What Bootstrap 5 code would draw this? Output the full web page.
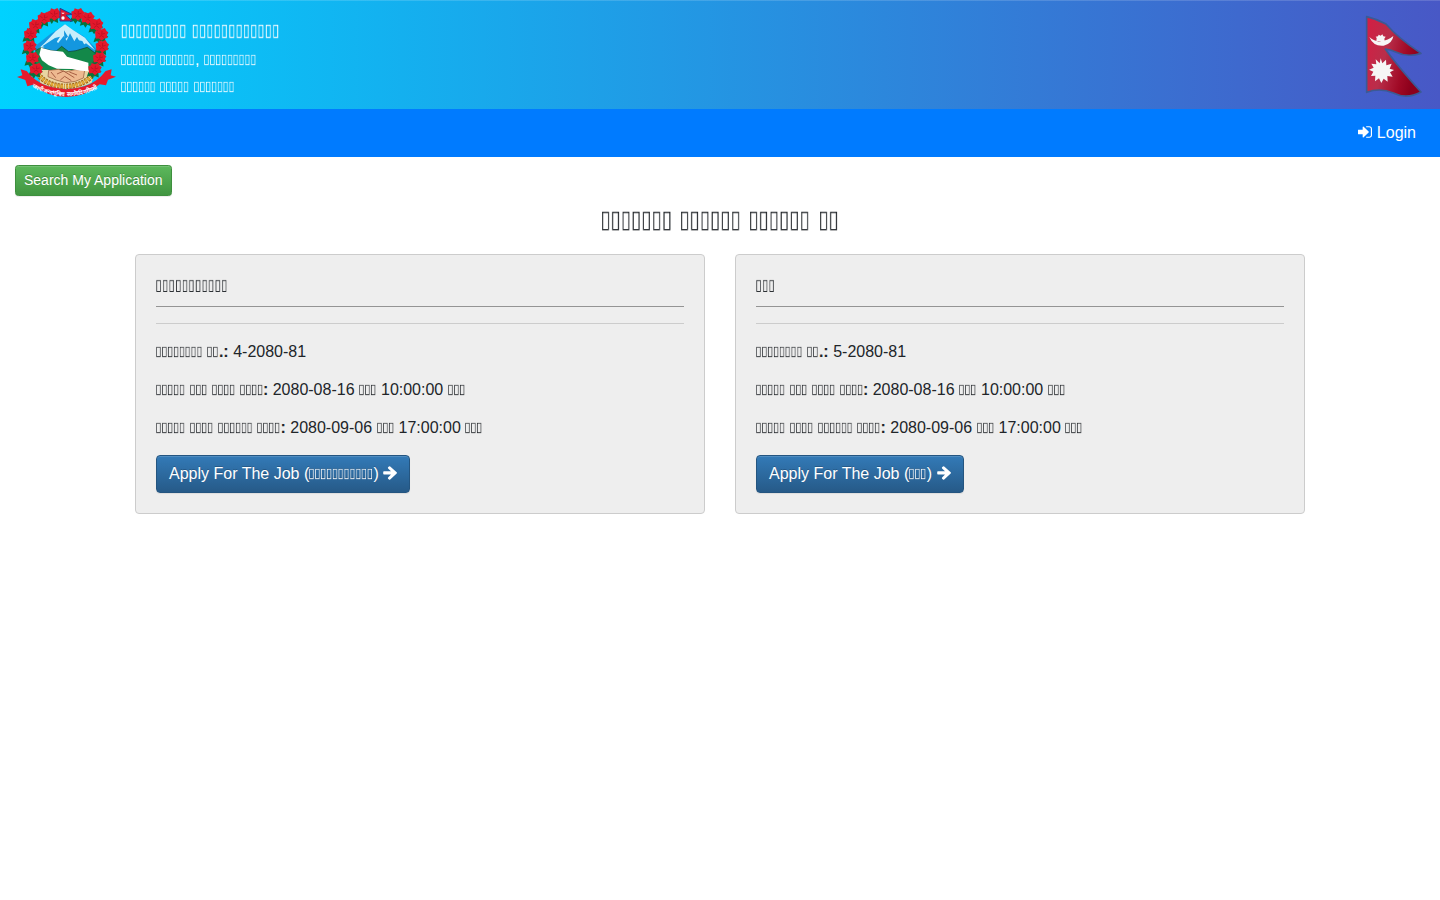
<!DOCTYPE html>
<html lang="ne">
<head>
<meta charset="utf-8">
<meta name="viewport" content="width=device-width, initial-scale=1">
<title>Job Application</title>
<link href="https://cdn.jsdelivr.net/npm/bootstrap@5.3.0/dist/css/bootstrap.min.css" rel="stylesheet">
<style>
body{font-family:"Liberation Sans",sans-serif;font-size:16px;line-height:1.5;color:#212529;background:#fff}
.site-head{height:109px;background:linear-gradient(90deg,#00d2ff 0%,#4858c6 100%);box-shadow:inset 0 1px 0 rgba(255,255,255,.15);padding:8px 18px 0 17px;color:#fff}
.site-text{padding-left:4.500px}
.site-name{font-size:20px;line-height:24px;height:24px;margin:11px 0 5px}
.site-sub{font-size:16px;line-height:24px;height:24px;margin:0 0 3px}
.emblem{width:99px;height:90px}
.flag{width:57px;height:83px;margin-top:7px}
.top-bar{height:48px;background:#007bff;padding:0 24px}
.top-bar a{color:#fff;text-decoration:none}
.btn{border-radius:4px;text-shadow:0 -1px 0 rgba(0,0,0,.2);box-shadow:inset 0 1px 0 rgba(255,255,255,.15),0 1px 1px rgba(0,0,0,.075);line-height:24px}
.find-row{padding:8px 15px 0}
.btn-find{font-size:14px;line-height:21px;padding:4px 8px;border-radius:3.2px;color:#fff;border-color:#3e8f3e;background:linear-gradient(#5cb85c,#419641)}
.btn-apply{color:#fff;border-color:#245580;background:linear-gradient(#337ab7,#265a88);margin-top:1px}
.page-title{font-size:28px;line-height:34px;height:34px;margin:8px 0 16px}
.jobs{max-width:1200px;--bs-gutter-x:30px}
.jobs .row{--bs-gutter-x:30px}
.job{background:#eee;border:1px solid #ccc;border-radius:4px;height:260px}
.job .card-body{padding:20px}
.job h5{font-size:18px;line-height:22px;height:22px;margin:0 0 9px}
.job hr{margin:0 0 16px;border:0;border-top:1px solid #ccc;opacity:1}
.job hr.dark{border-color:#949494}
.job p{margin:0 0 14px;line-height:24px;height:24px}
.ico{width:14px;height:14px;vertical-align:-1px;fill:currentColor}
/* a word of narrow boxes; --n is its number of boxes */
.bx{display:inline-block;font-family:"DejaVu Sans Condensed","DejaVu Sans",sans-serif;font-stretch:condensed;font-weight:400;line-height:1;transform:translateX(-.5px) scale(.738,.86);transform-origin:0 .1em;margin-right:calc(var(--n) * -.1298em);will-change:transform}
</style>
</head>
<body>
<header class="site-head d-flex justify-content-between">
  <div class="d-flex">
    <svg class="emblem" viewBox="50 24 297 270" aria-hidden="true">
      <defs>
        <g id="fl"><g transform="scale(1.12)"><path d="M-17 9l-4 12 10-3 5 8 5-8 12 5-1-12 9-5-12-4z" fill="#08713a"/><path d="M-17-7l7-3 2-6 9 3 8-4 5 8 5 4-4 7 2 8-9 1-7 6-7-6-9 1-1-9z" fill="#e3182b"/><path d="M-10-4l7 4M2-9l-1 9 9-3M-6 8l6-5 7 5" stroke="#b50d20" stroke-width="2" fill="none"/></g></g>
        <clipPath id="disc"><ellipse cx="197" cy="165" rx="93" ry="106"/></clipPath>
      </defs>
      <g clip-path="url(#disc)">
        <path d="M100 142L150 102l20-12 24-17 22 16 34 20 50 48v60H100z" fill="#1497df"/>
        <path d="M166 94l28-21 24 17 36 23 30 38-27-21-12 7-15-26-8 13-13-24-10 22-9-14-17 22-8-13-24 21-28 10 20-19z" fill="#c9eefb"/>
        <path d="M126 139l38-25 15-4-12 19-16 2-12 12zM191 91l12 19-11 9zM225 119l9 17 24 9-12-22z" fill="#1497df"/>
        <path d="M100 155l20-12 30 8 18 2 16-14 21 16 22-3 34-10 40 29v35H100z" fill="#138849" stroke="#123e2a" stroke-width="2"/>
        <path d="M100 180l32-13 30 9 49 6 75-2v48H100z" fill="#138849"/>
        <path d="M103 210h185v55H103z" fill="#e9d5a2"/>
      </g>
      <path d="M113 218q84 78 171-1l-10 31q-75 37-154 1z" fill="#e8d8a9"/>
      <path d="M145 211l30-3 21 8 28-7 29 2-4 23-24 10-29 4-29-8-24-10z" fill="#eeb990" stroke="#8d5134" stroke-width="2"/>
      <path d="M170 222l20-9 32 20M180 240l13-11 20 13M207 216l23 9M152 216l14 17" fill="none" stroke="#a86044" stroke-width="3"/>
      <path d="M122 143L150 151 188 155 200 170 235 180 264 188 265 214 240 212 215 207 170 206 145 196 125 181 117 164z" fill="#fff"/>
      <path d="M107 213q25 44 86 46M286 211q-26 46-88 48" fill="none" stroke="#9b6114" stroke-width="16" stroke-dasharray="7 3"/>
      <path d="M107 213q25 44 86 46M286 211q-26 46-88 48" fill="none" stroke="#e2aa36" stroke-width="10" stroke-dasharray="7 3"/>
      <use href="#fl" x="161" y="43"/><use href="#fl" x="131" y="54"/><use href="#fl" x="105" y="75"/><use href="#fl" x="90" y="102"/><use href="#fl" x="88" y="139"/><use href="#fl" x="96" y="174"/><use href="#fl" x="107" y="207"/>
      <use href="#fl" x="232" y="43"/><use href="#fl" x="262" y="54"/><use href="#fl" x="288" y="74"/><use href="#fl" x="303" y="103"/><use href="#fl" x="305" y="139"/><use href="#fl" x="297" y="174"/><use href="#fl" x="283" y="207"/>
      <path d="M179 25l36 18-18 3 19 17h-37z" fill="#da1831" stroke="#213f98" stroke-width="3"/><circle cx="188" cy="54" r="5" fill="#fff"/><path d="M183 38q5 7 10 0z" fill="#fff"/>
      <path d="M61 208l18 5q25 33 65 46 54 17 108 0 40-13 64-46l18-5-3 18 16 4-24 9-6 17-19-3q-44 38-100 38T98 254l-17 5-6-19-25-9 16-5z" fill="#e51b2c"/>
      <path id="motto" d="M94 260q103 56 210 0" fill="none"/>
      <text font-size="17" font-weight="bold" fill="#fff"><textPath href="#motto" textLength="205">जननी जन्मभूमिश्च स्वर्गादपि गरीयसी</textPath></text>
    </svg>
    <div class="site-text">
      <h1 class="site-name"><span class="bx" style="--n:9">▯▯▯▯▯▯▯▯▯</span> <span class="bx" style="--n:12">▯▯▯▯▯▯▯▯▯▯▯▯</span></h1>
      <p class="site-sub"><span class="bx" style="--n:6">▯▯▯▯▯▯</span> <span class="bx" style="--n:6">▯▯▯▯▯▯</span>, <span class="bx" style="--n:9">▯▯▯▯▯▯▯▯▯</span></p>
      <p class="site-sub"><span class="bx" style="--n:6">▯▯▯▯▯▯</span> <span class="bx" style="--n:5">▯▯▯▯▯</span> <span class="bx" style="--n:7">▯▯▯▯▯▯▯</span></p>
    </div>
  </div>
  <svg class="flag" viewBox="0 0 171 249" aria-hidden="true">
    <defs><linearGradient id="red" x2="1" y2=".35"><stop stop-color="#d51d43"/><stop offset=".45" stop-color="#b92e4a"/><stop offset=".8" stop-color="#a00925"/><stop offset="1" stop-color="#8c001b"/></linearGradient></defs>
    <path d="M5 5Q35 12 63 27 99 69 168 115 126 128 92 111 77 104 61 102 94 149 168 231 125 254 85 234 45 217 5 232z" fill="url(#red)" stroke="#3b5a94" stroke-width="5" stroke-linejoin="round"/>
    <path d="M13 66q20 17 36 12 20-2 36-15-3 23-29 29-31 3-43-26z" fill="#f6f6f6"/>
    <path d="M34 78l1-9-3-4 7-1 2-5 6 3 5-4 3 6 7 1-4 6 1 7z" fill="#f6f6f6"/>
    <path d="M47 130l5 15 11-11 1 17 16-5-6 15 13 4-12 7 8 13-16-2 1 17-12-9-7 13-7-14-12 9 1-17-13 1 7-13-13-6 14-6-7-12 15 2-2-15 12 12z" fill="#f6f6f6"/>
  </svg>
</header>
<nav class="top-bar d-flex align-items-center justify-content-end">
  <a href="#"><svg class="ico" viewBox="0 128 1536 1280"><path d="M1184 768q0 26-19 45l-544 544q-19 19-45 19t-45-19-19-45v-288H64q-26 0-45-19T0 960V576q0-26 19-45t45-19h448V224q0-26 19-45t45-19 45 19l544 544q19 19 19 45zM1536 416v704q0 119-84.500 203.500T1248 1408H928q-13 0-22.500-9.500T896 1376q0-4-1-20t-.5-26.500 3-23.500 10-19.500 20.500-6.500h320q66 0 113-47t47-113V416q0-66-47-113t-113-47H936l-11.500-1-11.500-3-8-5.500-7-9-2-13.500q0-4-1-20t-.5-26.500 3-23.500 10-19.500T928 128h320q119 0 203.500 84.500T1536 416z"/></svg> Login</a>
</nav>
<main>
  <div class="find-row"><a href="#" class="btn btn-find d-inline-block align-top">Search My Application</a></div>
  <h3 class="page-title text-center"><span class="bx" style="--n:7">▯▯▯▯▯▯▯</span> <span class="bx" style="--n:6">▯▯▯▯▯▯</span> <span class="bx" style="--n:6">▯▯▯▯▯▯</span> <span class="bx" style="--n:2">▯▯</span></h3>
  <div class="container-fluid jobs">
    <div class="row">
      <div class="col-6"><div class="card job"><div class="card-body">
        <h5><span class="bx" style="--n:11">▯▯▯▯▯▯▯▯▯▯▯</span></h5><hr class="dark"><hr>
        <p><b><span class="bx" style="--n:8">▯▯▯▯▯▯▯▯</span> <span class="bx" style="--n:2">▯▯</span>.:</b> 4-2080-81</p>
        <p><b><span class="bx" style="--n:5">▯▯▯▯▯</span> <span class="bx" style="--n:3">▯▯▯</span> <span class="bx" style="--n:4">▯▯▯▯</span> <span class="bx" style="--n:4">▯▯▯▯</span>:</b> 2080-08-16 <span class="bx" style="--n:3">▯▯▯</span> 10:00:00 <span class="bx" style="--n:3">▯▯▯</span></p>
        <p><b><span class="bx" style="--n:5">▯▯▯▯▯</span> <span class="bx" style="--n:4">▯▯▯▯</span> <span class="bx" style="--n:6">▯▯▯▯▯▯</span> <span class="bx" style="--n:4">▯▯▯▯</span>:</b> 2080-09-06 <span class="bx" style="--n:3">▯▯▯</span> 17:00:00 <span class="bx" style="--n:3">▯▯▯</span></p>
        <a href="#" class="btn btn-apply">Apply For The Job (<span class="bx" style="--n:11">▯▯▯▯▯▯▯▯▯▯▯</span>) <svg class="ico" viewBox="0 0 14 14"><path d="M7.200.4L13.700 6.200q.5.600 0 1.200L7.200 13.600q-.6.500-1.200 0l-.9-.9q-.5-.6 0-1.200L8 8.500H1Q.2 8.500.2 7.600V6Q.2 5.200 1 5.200h7L5.100 2.400q-.5-.6 0-1.200L6 .4q.6-.5 1.200 0z"/></svg></a>
      </div></div></div>
      <div class="col-6"><div class="card job"><div class="card-body">
        <h5><span class="bx" style="--n:3">▯▯▯</span></h5><hr class="dark"><hr>
        <p><b><span class="bx" style="--n:8">▯▯▯▯▯▯▯▯</span> <span class="bx" style="--n:2">▯▯</span>.:</b> 5-2080-81</p>
        <p><b><span class="bx" style="--n:5">▯▯▯▯▯</span> <span class="bx" style="--n:3">▯▯▯</span> <span class="bx" style="--n:4">▯▯▯▯</span> <span class="bx" style="--n:4">▯▯▯▯</span>:</b> 2080-08-16 <span class="bx" style="--n:3">▯▯▯</span> 10:00:00 <span class="bx" style="--n:3">▯▯▯</span></p>
        <p><b><span class="bx" style="--n:5">▯▯▯▯▯</span> <span class="bx" style="--n:4">▯▯▯▯</span> <span class="bx" style="--n:6">▯▯▯▯▯▯</span> <span class="bx" style="--n:4">▯▯▯▯</span>:</b> 2080-09-06 <span class="bx" style="--n:3">▯▯▯</span> 17:00:00 <span class="bx" style="--n:3">▯▯▯</span></p>
        <a href="#" class="btn btn-apply">Apply For The Job (<span class="bx" style="--n:3">▯▯▯</span>) <svg class="ico" viewBox="0 0 14 14"><path d="M7.200.4L13.700 6.200q.5.600 0 1.200L7.200 13.600q-.6.500-1.200 0l-.9-.9q-.5-.6 0-1.200L8 8.500H1Q.2 8.500.2 7.600V6Q.2 5.200 1 5.200h7L5.100 2.400q-.5-.6 0-1.200L6 .4q.6-.5 1.200 0z"/></svg></a>
      </div></div></div>
    </div>
  </div>
</main>
<script src="https://cdn.jsdelivr.net/npm/bootstrap@5.3.0/dist/js/bootstrap.bundle.min.js"></script>
</body>
</html>
